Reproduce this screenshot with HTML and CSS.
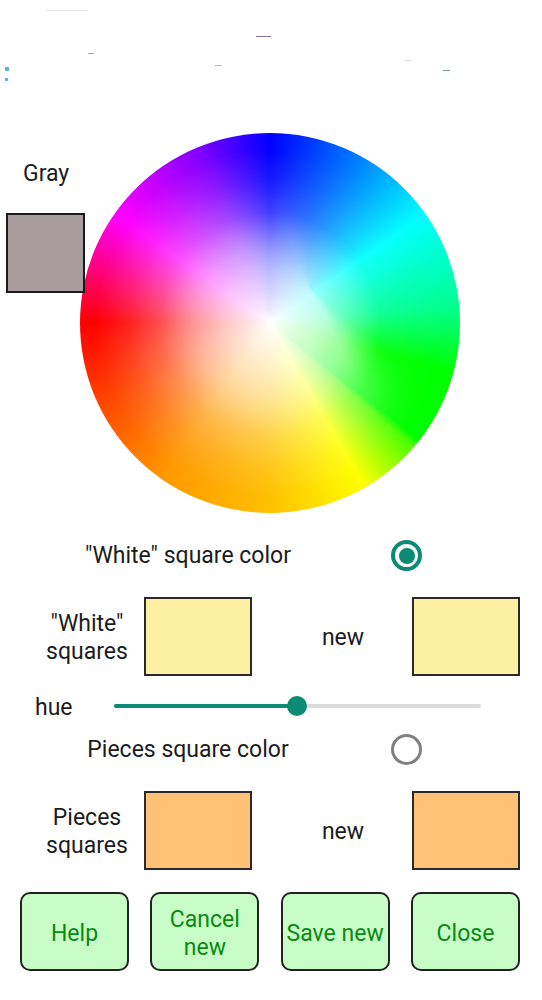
FILE: index.html
```html
<!DOCTYPE html>
<html lang="en">

<head>
  <meta charset="UTF-8" />
  <meta name="viewport" content="width=device-width, initial-scale=1.0" />
  <title>Board colors</title>
  <link rel="stylesheet" href="styles.css">
</head>

<body>
  <div class="top-strip">
    <span class="speck speck-a"></span>
    <span class="speck speck-b"></span>
    <span class="speck speck-c"></span>
    <span class="speck speck-d"></span>
    <span class="speck speck-e"></span>
    <span class="speck speck-f"></span>
    <span class="speck speck-g"></span>
    <span class="speck speck-h"></span>
  </div>

  <div class="picker">
    <div class="gray-col">
      <div class="gray-label">Gray</div>
      <div class="gray-box"></div>
    </div>
    <div class="wheel"></div>
  </div>

  <div class="radio-row first">
    <div class="radio-text">"White" square color</div>
    <div class="radio checked"></div>
  </div>

  <div class="swatch-row">
    <div class="swatch-label">"White"<br>squares</div>
    <div class="swatch white-sw"></div>
    <div class="swatch-new">new</div>
    <div class="swatch white-sw"></div>
  </div>

  <div class="hue-row">
    <div class="hue-label">hue</div>
    <div class="slider">
      <div class="slider-fill"></div>
      <div class="slider-thumb"></div>
    </div>
  </div>

  <div class="radio-row">
    <div class="radio-text">Pieces square color</div>
    <div class="radio"></div>
  </div>

  <div class="swatch-row">
    <div class="swatch-label">Pieces<br>squares</div>
    <div class="swatch pieces-sw"></div>
    <div class="swatch-new">new</div>
    <div class="swatch pieces-sw"></div>
  </div>

  <div class="buttons">
    <button class="btn">Help</button>
    <button class="btn">Cancel new</button>
    <button class="btn">Save new</button>
    <button class="btn">Close</button>
  </div>
</body>

</html>
```

FILE: styles.css
```css
* {
  margin: 0;
  box-sizing: border-box;
}

body {
  font-family: Roboto, sans-serif;
  font-size: 23px;
  line-height: 28px;
  color: #1c1c1c;
  background-color: white;
  width: 542px;
}

.top-strip {
  position: relative;
  height: 110px;
}

/* leftovers of the faded header */
.speck {
  position: absolute;
  height: 1px;
}

.speck-a { left: 46px; top: 10px; width: 42px; background: #e6e3e3; }
.speck-b { left: 256px; top: 36px; width: 15px; background: #7d72c4; }
.speck-c { left: 88px; top: 53px; width: 6px; background: #8fb5b0; }
.speck-d { left: 215px; top: 65px; width: 7px; background: #9cc4c2; }
.speck-e { left: 404px; top: 60px; width: 8px; background: #e2e2e2; }
.speck-f { left: 443px; top: 70px; width: 7px; background: #5f9f9a; }
.speck-g { left: 5px; top: 67px; width: 4px; height: 4px; background: #4cc0d0; }
.speck-h { left: 5px; top: 78px; width: 3px; height: 3px; background: #4cc0d0; }

.picker {
  display: flex;
  margin-top: 23px;
  padding-left: 6px;
}

.gray-col {
  position: relative;
  z-index: 1;
  width: 79px;
  flex-shrink: 0;
  margin-right: -5px;
}

.gray-label {
  margin-top: 27px;
  height: 28px;
  padding-left: 17px;
}

.gray-box {
  width: 79px;
  height: 80px;
  margin-top: 25px;
  background-color: #a89c9e;
  border: 2px solid #1a1a1a;
}

.wheel {
  position: relative;
  width: 380px;
  height: 380px;
  border-radius: 50%;
  background: conic-gradient(#0000ff 0deg, #0070ff 25deg, #00ffff 55deg, #00ff90 85deg, #00ff00 105deg, #00ff00 128deg, #50ff00 131deg, #ffff00 150deg, #ffc000 180deg, #ff9800 215deg, #ff0000 270deg, #ff00ff 305deg, #8000ff 338deg, #0000ff 360deg);
}

/* white falloff near the middle */
.wheel::before {
  content: "";
  position: absolute;
  inset: 0;
  border-radius: 50%;
  background: radial-gradient(circle closest-side, #fff 0%, rgba(255, 255, 255, 0.85) 8%, rgba(255, 255, 255, 0.6) 25%, rgba(255, 255, 255, 0.28) 42%, rgba(255, 255, 255, 0) 58%);
}

/* wider wash, mostly on the warm side of the wheel */
.wheel::after {
  content: "";
  position: absolute;
  inset: 0;
  border-radius: 50%;
  background: radial-gradient(circle closest-side, rgba(255, 255, 255, 0.4) 0%, rgba(255, 255, 255, 0.4) 40%, rgba(255, 255, 255, 0.3) 58%, rgba(255, 255, 255, 0.12) 75%, rgba(255, 255, 255, 0) 92%);
  -webkit-mask-image: conic-gradient(at 229px 154px, rgba(0, 0, 0, 0.55) 0deg, rgba(0, 0, 0, 0.25) 60deg, rgba(0, 0, 0, 0.2) 130deg, #000 152deg, #000 300deg, rgba(0, 0, 0, 0.8) 340deg, rgba(0, 0, 0, 0.55) 360deg);
  mask-image: conic-gradient(at 229px 154px, rgba(0, 0, 0, 0.55) 0deg, rgba(0, 0, 0, 0.25) 60deg, rgba(0, 0, 0, 0.2) 130deg, #000 152deg, #000 300deg, rgba(0, 0, 0, 0.8) 340deg, rgba(0, 0, 0, 0.55) 360deg);
}

.radio-row {
  display: flex;
  align-items: center;
  height: 40px;
  margin-top: 3px;
}

.radio-row.first {
  margin-top: 22px;
}

.radio-text {
  width: 376px;
  padding-top: 2px;
  text-align: center;
}

.radio {
  width: 31px;
  height: 31px;
  margin-left: 15px;
  border: 3px solid #808080;
  border-radius: 50%;
}

.radio.checked {
  border: 4.5px solid #0b8a74;
  padding: 3.5px;
  background-clip: content-box;
  background-color: #0b8a74;
}

.swatch-row {
  display: flex;
  align-items: center;
  margin-top: 22px;
  padding-left: 30px;
}

.swatch-label {
  width: 114px;
  padding-top: 3px;
  text-align: center;
}

.swatch {
  width: 108px;
  height: 79px;
  border: 2px solid #2a2a2a;
}

.white-sw {
  background-color: #fff1a3;
}

.pieces-sw {
  background-color: #ffc175;
}

.swatch-new {
  width: 160px;
  padding-left: 22px;
  padding-top: 3px;
  text-align: center;
}

.hue-row {
  display: flex;
  align-items: center;
  height: 40px;
  margin-top: 10px;
  padding-left: 35px;
}

.hue-label {
  width: 79px;
  padding-top: 3px;
}

.slider {
  position: relative;
  width: 367px;
  height: 4px;
  margin-top: -1px;
  background-color: #dcdcdc;
  border-radius: 2px;
}

.slider-fill {
  width: 183px;
  height: 4px;
  background-color: #0b8a74;
  border-radius: 2px;
}

.slider-thumb {
  position: absolute;
  left: 173px;
  top: -8px;
  width: 20px;
  height: 20px;
  background-color: #0b8a74;
  border-radius: 50%;
}

.buttons {
  display: flex;
  gap: 21.33px;
  margin-top: 22px;
  padding-left: 20px;
}

.btn {
  width: 109px;
  height: 79px;
  padding: 4px 0 0;
  font-family: Roboto, sans-serif;
  font-size: 23px;
  line-height: 28px;
  color: #0a8a12;
  background-color: #c8fdc8;
  border: 2px solid #222;
  border-radius: 10px;
}
```
